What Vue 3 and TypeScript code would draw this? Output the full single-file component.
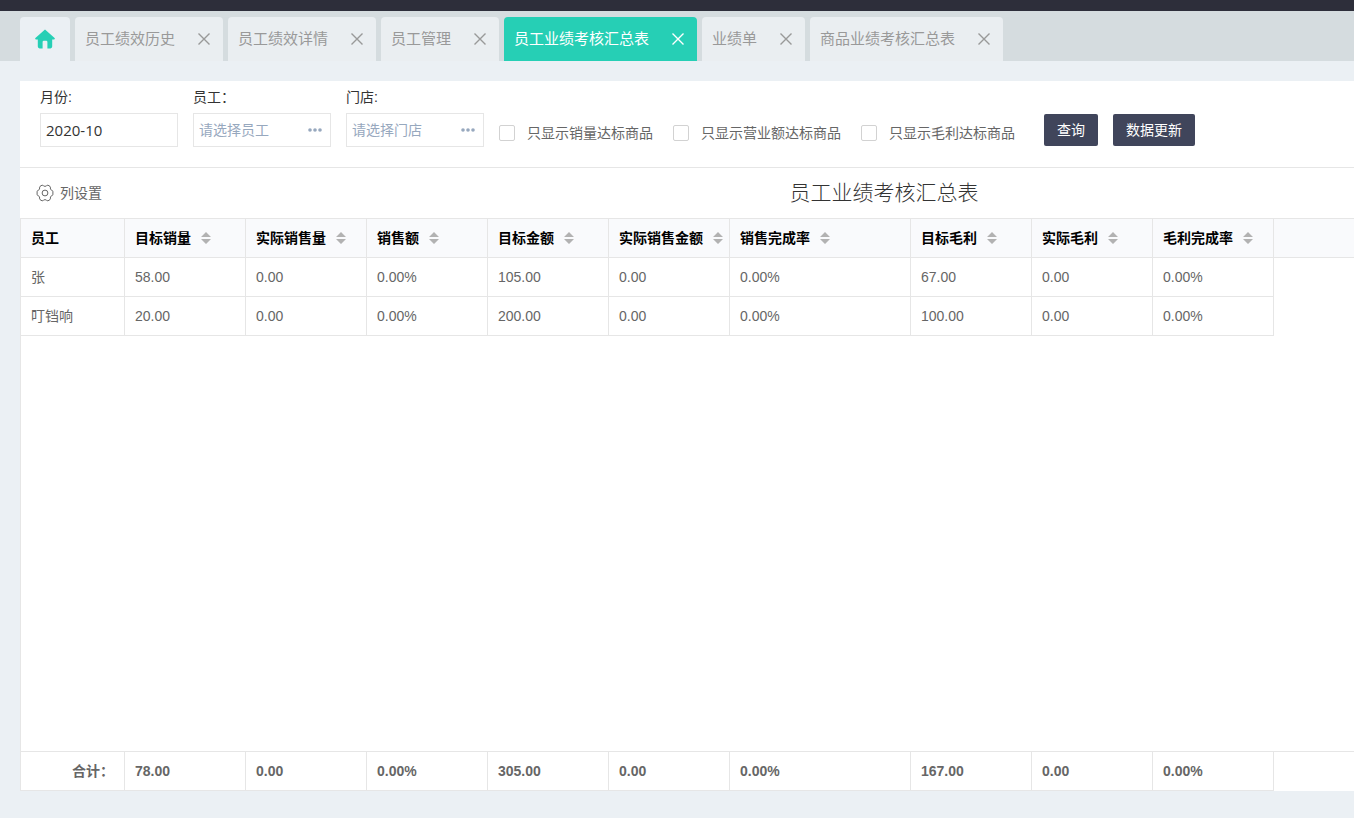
<script setup lang="ts">
import { ref } from 'vue'

interface Tab {
  title: string
}

interface Column {
  key: string
  title: string
  sortable: boolean
}

type Row = Record<string, string>

const tabs: Tab[] = [
  { title: '员工绩效历史' },
  { title: '员工绩效详情' },
  { title: '员工管理' },
  { title: '员工业绩考核汇总表' },
  { title: '业绩单' },
  { title: '商品业绩考核汇总表' },
]
const activeTab = ref(3)

const month = ref('2020-10')
const employee = ref('')
const store = ref('')

const options = ref([
  { label: '只显示销量达标商品', checked: false },
  { label: '只显示营业额达标商品', checked: false },
  { label: '只显示毛利达标商品', checked: false },
])

const columns: Column[] = [
  { key: 'name', title: '员工', sortable: false },
  { key: 'targetQty', title: '目标销量', sortable: true },
  { key: 'actualQty', title: '实际销售量', sortable: true },
  { key: 'sales', title: '销售额', sortable: true },
  { key: 'targetAmount', title: '目标金额', sortable: true },
  { key: 'actualAmount', title: '实际销售金额', sortable: true },
  { key: 'salesRate', title: '销售完成率', sortable: true },
  { key: 'targetProfit', title: '目标毛利', sortable: true },
  { key: 'actualProfit', title: '实际毛利', sortable: true },
  { key: 'profitRate', title: '毛利完成率', sortable: true },
]

const makeRow = (values: string[]): Row =>
  Object.fromEntries(columns.map((c, i) => [c.key, values[i]]))

const rows: Row[] = [
  makeRow(['张', '58.00', '0.00', '0.00%', '105.00', '0.00', '0.00%', '67.00', '0.00', '0.00%']),
  makeRow(['叮铛响', '20.00', '0.00', '0.00%', '200.00', '0.00', '0.00%', '100.00', '0.00', '0.00%']),
]
const totals = makeRow(['合计：', '78.00', '0.00', '0.00%', '305.00', '0.00', '0.00%', '167.00', '0.00', '0.00%'])
</script>

<template>
  <div class="page">
    <header class="topbar"></header>

    <nav class="tabs">
      <a class="tab home" href="#" aria-label="首页">
        <svg width="20" height="20" viewBox="0 0 20 20" aria-hidden="true">
          <path
            d="M10 0.4 L19.6 9 Q20.4 10.4 18.8 10.6 H17.2 V17.6 Q17.2 19.4 15.4 19.4 H12.4 V13 Q12.4 11.8 11.2 11.8 H8.8 Q7.6 11.8 7.6 13 V19.4 H4.6 Q2.8 19.4 2.8 17.6 V10.6 H1.2 Q-0.4 10.4 0.4 9 Z"
          />
        </svg>
      </a>
      <div v-for="(tab, i) in tabs" :key="tab.title" class="tab" :class="{ active: i === activeTab }">
        <a class="tab-link" href="#" @click.prevent="activeTab = i">{{ tab.title }}</a>
        <button class="tab-close" type="button" :aria-label="'关闭' + tab.title">
          <svg width="14" height="14" viewBox="0 0 14 14" aria-hidden="true">
            <path d="M1.5 1.5 L12.5 12.5 M12.5 1.5 L1.5 12.5" />
          </svg>
        </button>
      </div>
    </nav>

    <main class="panel">
      <form class="filters" @submit.prevent>
        <div class="field">
          <label for="month">月份:</label>
          <div class="box"><input id="month" v-model="month" class="month" type="text" /></div>
        </div>
        <div class="field">
          <label for="employee">员工：</label>
          <div class="box">
            <input id="employee" v-model="employee" type="text" placeholder="请选择员工" />
            <button class="more" type="button" aria-label="选择员工">
              <svg width="14" height="4" viewBox="0 0 14 4" aria-hidden="true">
                <circle cx="2" cy="2" r="1.8" /><circle cx="7" cy="2" r="1.8" /><circle cx="12" cy="2" r="1.8" />
              </svg>
            </button>
          </div>
        </div>
        <div class="field">
          <label for="store">门店:</label>
          <div class="box">
            <input id="store" v-model="store" type="text" placeholder="请选择门店" />
            <button class="more" type="button" aria-label="选择门店">
              <svg width="14" height="4" viewBox="0 0 14 4" aria-hidden="true">
                <circle cx="2" cy="2" r="1.8" /><circle cx="7" cy="2" r="1.8" /><circle cx="12" cy="2" r="1.8" />
              </svg>
            </button>
          </div>
        </div>
        <div class="checks">
          <label v-for="option in options" :key="option.label" class="check">
            <input v-model="option.checked" type="checkbox" />
            <span>{{ option.label }}</span>
          </label>
        </div>
        <div class="actions">
          <button class="btn" type="submit">查询</button>
          <button class="btn" type="button">数据更新</button>
        </div>
      </form>

      <section class="report">
        <div class="toolbar">
          <button class="settings" type="button">
            <svg width="18" height="18" viewBox="0 0 18 18" aria-hidden="true">
              <path
                d="M6 1.2 Q7 1 7.4 1.8 Q9 3 10.6 1.8 Q11 1 12 1.2 L14 2.4 Q14.7 3 14.3 4 Q14.3 5.8 15.9 6.4 Q16.9 6.6 16.9 7.6 V10.4 Q16.9 11.4 15.9 11.6 Q14.3 12.2 14.3 14 Q14.7 15 14 15.6 L12 16.8 Q11 17 10.6 16.2 Q9 15 7.4 16.2 Q7 17 6 16.8 L4 15.6 Q3.3 15 3.7 14 Q3.7 12.2 2.1 11.6 Q1.1 11.4 1.1 10.4 V7.6 Q1.1 6.6 2.1 6.4 Q3.7 5.8 3.7 4 Q3.3 3 4 2.4 Z"
              />
              <circle cx="9" cy="9" r="2.9" />
            </svg>
            列设置
          </button>
          <h1>员工业绩考核汇总表</h1>
        </div>

        <div class="grid">
          <table>
            <colgroup>
              <col v-for="c in columns" :key="c.key" :class="'col-' + c.key" />
              <col />
            </colgroup>
            <thead>
              <tr>
                <th v-for="c in columns" :key="c.key" scope="col">
                  <span class="head">
                    {{ c.title }}
                    <button v-if="c.sortable" class="sort" type="button" :aria-label="'排序' + c.title">
                      <svg width="10" height="12" viewBox="0 0 10 12" aria-hidden="true">
                        <path d="M0 5 L5 0 L10 5 Z M0 7 H10 L5 12 Z" />
                      </svg>
                    </button>
                  </span>
                </th>
                <td class="rest"></td>
              </tr>
            </thead>
            <tbody>
              <tr v-for="row in rows" :key="row.name">
                <td v-for="c in columns" :key="c.key">{{ row[c.key] }}</td>
                <td class="rest"></td>
              </tr>
            </tbody>
          </table>

          <table class="totals">
            <colgroup>
              <col v-for="c in columns" :key="c.key" :class="'col-' + c.key" />
              <col />
            </colgroup>
            <tbody>
              <tr>
                <td v-for="c in columns" :key="c.key">{{ totals[c.key] }}</td>
                <td class="rest"></td>
              </tr>
            </tbody>
          </table>
        </div>
      </section>
    </main>
  </div>
</template>

<style>
body {
  margin: 0;
  background: #ebf0f4;
}
</style>

<style scoped>
* {
  box-sizing: border-box;
}

.page {
  display: flex;
  flex-direction: column;
  height: 100vh;
  padding-bottom: 27px;
  overflow: hidden;
  background: #ebf0f4;
  color: #666;
  font: 14px/20px "Liberation Sans", "Noto Sans CJK SC", sans-serif;
}

button,
input {
  font: inherit;
  color: inherit;
}

button {
  padding: 0;
  border: 0;
  background: none;
  cursor: pointer;
}

a {
  color: inherit;
  text-decoration: none;
}

svg {
  display: block;
}

.topbar {
  flex: none;
  height: 11px;
  background: #2d2e3a;
}

.tabs {
  display: flex;
  flex: none;
  gap: 5px;
  padding: 6px 20px 0;
  background: #d5dcdf;
}

.tab {
  display: flex;
  align-items: center;
  justify-content: space-between;
  gap: 22px;
  height: 44px;
  padding: 0 12px 0 10px;
  border-radius: 4px 4px 0 0;
  background: #eaeef1;
  color: #999;
  font-size: 15px;
  white-space: nowrap;
}

.tab.home {
  justify-content: center;
  width: 50px;
  padding: 0;
  background: #ebf0f4;
  fill: #26cfb5;
}

.tab.active {
  background: #26cfb5;
  color: #fff;
}

.tab-close svg {
  fill: none;
  stroke: currentColor;
  stroke-width: 1.4;
}

.panel {
  display: flex;
  flex: 1;
  flex-direction: column;
  margin: 20px 0 0 20px;
  overflow: hidden;
  background: #fff;
}

.filters {
  display: flex;
  flex: none;
  align-items: flex-start;
  gap: 15px;
  padding: 6px 20px 20px;
  border-bottom: 1px solid #e6e6e6;
  white-space: nowrap;
}

.field label {
  display: block;
  margin-bottom: 6px;
  color: #333;
}

.box {
  display: flex;
  align-items: center;
  width: 138px;
  height: 34px;
  padding-right: 8px;
  border: 1px solid #e6e6e6;
}

.box input {
  flex: 1;
  min-width: 0;
  height: 32px;
  padding: 0 5px;
  border: 0;
  outline: 0;
  background: none;
}

.box .month {
  color: #333;
  font-family: "Open Sans", sans-serif;
  font-size: 15px;
}

.box input::placeholder {
  color: #97a8be;
  opacity: 1;
}

.more {
  fill: #97a8be;
}

.checks {
  display: flex;
  gap: 20px;
  padding-top: 36px;
}

.check {
  display: flex;
  align-items: center;
  gap: 12px;
}

.check input {
  width: 16px;
  height: 16px;
  margin: 0;
  border: 1px solid #d2d2d2;
  border-radius: 2px;
  appearance: none;
  background: #fff;
}

.check input:checked {
  background: #26cfb5;
}

.actions {
  display: flex;
  gap: 15px;
  padding: 27px 0 0 14px;
}

.btn {
  height: 32px;
  padding: 0 13px;
  border-radius: 2px;
  background: #40455b;
  color: #fff;
}

.report {
  display: flex;
  flex: 1;
  flex-direction: column;
  min-width: 1728px;
}

.toolbar {
  display: grid;
  flex: none;
  grid-template-columns: 1fr auto 1fr;
  align-items: center;
  height: 50px;
  padding: 0 16px;
}

.settings {
  display: flex;
  align-items: center;
  justify-self: start;
  gap: 6px;
}

.settings svg {
  fill: none;
  stroke: #666;
  stroke-width: 1;
}

h1 {
  margin: 0;
  color: #333;
  font-size: 21px;
  font-weight: 300;
  line-height: 30px;
}

.grid {
  display: flex;
  flex: 1;
  flex-direction: column;
  justify-content: space-between;
  border-left: 1px solid #e6e6e6;
}

table {
  width: 100%;
  border-collapse: separate;
  border-spacing: 0;
  border-top: 1px solid #e6e6e6;
  table-layout: fixed;
}

col {
  width: 121px;
}

.col-name {
  width: 104px;
}

.col-salesRate {
  width: 181px;
}

col:last-child {
  width: auto;
}

th,
td {
  height: 39px;
  padding: 0 10px;
  border-right: 1px solid #e6e6e6;
  border-bottom: 1px solid #e6e6e6;
  text-align: left;
  white-space: nowrap;
}

td.rest {
  border-right: 0;
}

tbody td.rest {
  border-bottom: 0;
}

thead tr {
  background: #f9fafc;
}

th {
  color: #000;
}

.head {
  display: flex;
  align-items: center;
  gap: 10px;
}

.sort {
  fill: #b2b2b2;
}

.totals {
  font-weight: 700;
}

.totals td:first-child {
  text-align: right;
}
</style>
